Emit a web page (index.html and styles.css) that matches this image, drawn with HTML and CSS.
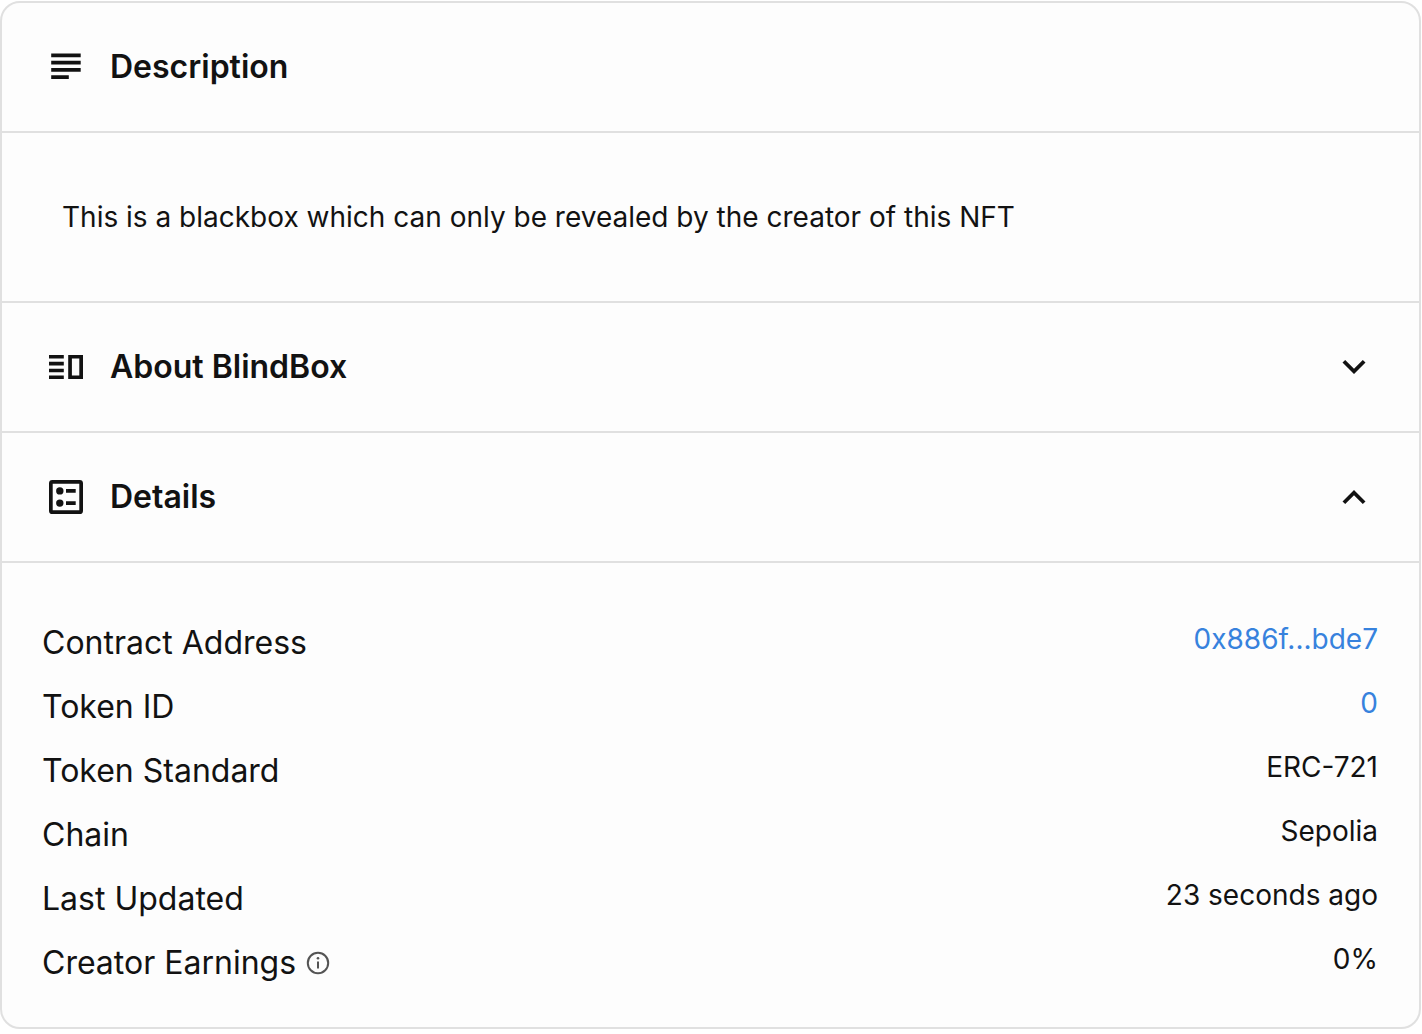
FILE: index.html
```html
<!DOCTYPE html>
<html lang="en">
<head>
<meta charset="utf-8">
<title>BlindBox</title>
<link rel="stylesheet" href="styles.css">
</head>
<body>
<main class="panel">
  <section>
    <h2 class="head">
      <svg class="icon" viewBox="0 0 40 40" aria-hidden="true"><path d="M5.200 6.500h29.500v3.700H5.200zm0 7.300h29.500v3.700H5.200zm0 7.300h29.500v3.700H5.200zm0 7.200h17.600V32H5.200z"/></svg>
      <span>Description</span>
    </h2>
    <p class="description">This is a blackbox which can only be revealed by the creator of this NFT</p>
  </section>
  <section>
    <h2 class="title">
      <button class="head" type="button" aria-expanded="false">
        <svg class="icon" viewBox="0 0 40 40" aria-hidden="true"><path d="M3 7.900h14.800v3.600H3zm0 6.900h14.800v3.600H3zm0 6.900h14.800v3.600H3zm0 6.800h14.800v3.600H3zM22.200 7.900H37v24.200H22.200zm3.700 3.600v17h7.400v-17z" fill-rule="evenodd"/></svg>
        <span>About BlindBox</span>
        <svg class="chevron" viewBox="0 0 24 24" aria-hidden="true"><path d="M7.410 8.290 12 12.870l4.590-4.580L18 9.700l-6 6-6-6z"/></svg>
      </button>
    </h2>
  </section>
  <section>
    <h2 class="title">
      <button class="head" type="button" aria-expanded="true">
        <svg class="icon" viewBox="0 0 40 40" aria-hidden="true"><rect class="frame" x="4.850" y="4.850" width="30.300" height="30.300" rx="1.500"/><circle cx="13.800" cy="13.900" r="3.700"/><circle cx="13.800" cy="26.100" r="3.700"/><path d="M20 12.100h9.700v3.700H20zm0 12.200h9.700V28H20z"/></svg>
        <span>Details</span>
        <svg class="chevron" viewBox="0 0 24 24" aria-hidden="true"><path d="m12 8.300-6 6 1.410 1.410L12 11.130l4.590 4.580L18 14.300z"/></svg>
      </button>
    </h2>
    <dl class="details">
      <div class="row"><dt>Contract Address</dt><dd><a href="#contract">0x886f...bde7</a></dd></div>
      <div class="row"><dt>Token ID</dt><dd><a href="#token">0</a></dd></div>
      <div class="row"><dt>Token Standard</dt><dd>ERC-721</dd></div>
      <div class="row"><dt>Chain</dt><dd>Sepolia</dd></div>
      <div class="row"><dt>Last Updated</dt><dd>23 seconds ago</dd></div>
      <div class="row"><dt>Creator Earnings <svg class="info" viewBox="0 0 24 24" aria-hidden="true"><circle class="ring" cx="12" cy="12" r="10.200"/><circle cx="12" cy="7.300" r="1.300"/><path d="M11 10.500h2v7h-2z"/></svg></dt><dd>0%</dd></div>
    </dl>
  </section>
</main>
</body>
</html>
```
FILE: styles.css
```css
* { box-sizing: border-box; }

body {
  margin: 0;
  padding: 1px 1px 5px 0;
  background: #fff;
  color: #121212;
  font-family: Inter, "Liberation Sans", sans-serif;
}

.panel {
  border: 2px solid #e0e0e0;
  border-radius: 20px;
  background: #fdfdfd;
  overflow: hidden;
}

.panel section + section { border-top: 2px solid #e0e0e0; }

.title { margin: 0; }

.head {
  display: flex;
  align-items: center;
  gap: 24px;
  width: 100%;
  height: 128px;
  margin: 0;
  padding: 0 42px 0 44px;
  border: 0;
  background: none;
  color: inherit;
  font: 600 32px/48px Inter, "Liberation Sans", sans-serif;
  text-align: left;
}

.title .head { cursor: pointer; }

.icon {
  flex: none;
  width: 40px;
  height: 40px;
  fill: currentColor;
}

.frame {
  fill: none;
  stroke: currentColor;
  stroke-width: 3.7;
}

.chevron {
  flex: none;
  width: 46px;
  height: 46px;
  margin-left: auto;
  fill: currentColor;
}

.description {
  margin: 0;
  padding: 62px 60px;
  border-top: 2px solid #e0e0e0;
  font-size: 28px;
  line-height: 44px;
}

.details {
  margin: 0;
  padding: 48px 41px 32px 40px;
  border-top: 2px solid #e0e0e0;
}

.row {
  display: flex;
  justify-content: space-between;
  height: 64px;
}

.row dt {
  display: flex;
  align-items: center;
  gap: 10px;
  font-size: 32px;
  line-height: 64px;
}

.row dd {
  margin: 0;
  font-size: 28px;
  line-height: 56px;
}

.row a {
  color: #3782dd;
  text-decoration: none;
}

.info {
  width: 24px;
  height: 24px;
  fill: #545454;
}

.ring {
  fill: none;
  stroke: #545454;
  stroke-width: 2;
}
```
